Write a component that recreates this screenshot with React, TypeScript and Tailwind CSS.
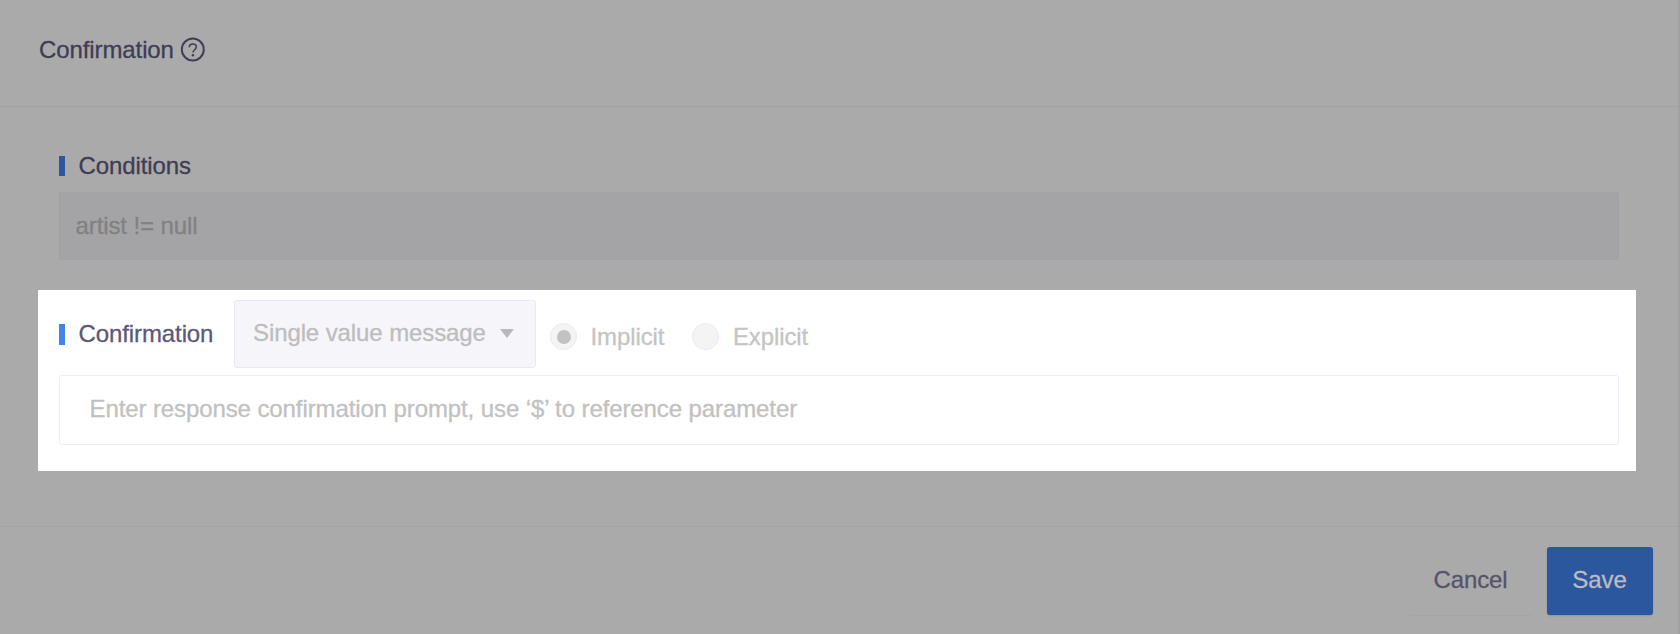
import type { ReactNode } from "react";

function SectionLabel({ children, dimmed = false }: { children: ReactNode; dimmed?: boolean }) {
  return (
    <div className="flex items-start">
      <span className={dimmed ? "mt-[4px] h-5 w-1.5 bg-[#2b579f]" : "mt-[4px] h-[21px] w-1.5 bg-[#4183ef]"} />
      <span className={dimmed ? "ml-[13.5px] text-[#3f3c55]" : "ml-[13.5px] text-[#5b5878]"}>{children}</span>
    </div>
  );
}

function Radio({ label, checked = false }: { label: string; checked?: boolean }) {
  return (
    <div role="radio" aria-checked={checked} className="flex items-start text-[#c4c4c4]">
      <span className="flex size-[27px] items-center justify-center rounded-full border border-[#e9e8f6] bg-[#f4f4f4]">
        {checked && <span className="size-[14px] rounded-full bg-[#c2c2c2]" />}
      </span>
      <span className="ml-[13.5px]">{label}</span>
    </div>
  );
}

export default function App() {
  return (
    <main className="flex h-[634px] w-[1680px] flex-col overflow-hidden border-r-2 border-[#a1a1a1] bg-[#aaaaaa] font-['Liberation_Sans',Arial,sans-serif] text-[24px] leading-[28px] tracking-[-0.1px] whitespace-nowrap [-webkit-text-stroke:0.3px_currentColor]">
      <header className="flex h-[107px] shrink-0 items-start border-b border-[#a1a1a2] pt-[36px] pl-[39px] text-[#3f3c55]">
        <h1 className="w-[136px]">Confirmation</h1>
        <svg className="mt-px ml-[5px] size-[26px]" viewBox="0 0 26 26" fill="none" stroke="currentColor">
          <circle cx="12.8" cy="12.5" r="11" strokeWidth="1.9" />
          <path d="M9.3 10.3C9.3 8.2 10.8 7 12.8 7s3.5 1.2 3.5 3c0 2.7-3.3 2.8-3.3 5.5" strokeWidth="1.5" />
          <circle cx="12.9" cy="18.2" r="1.2" fill="currentColor" stroke="none" />
        </svg>
      </header>

      <section className="flex h-[420px] shrink-0 flex-col border-b border-[#a3a3ac]">
        <div className="pt-[45px] pl-[59px]">
          <SectionLabel dimmed>Conditions</SectionLabel>
          <div className="mt-[12px] h-[68px] w-[1560px] rounded-[3px] border border-[#a1a1a7] bg-[#a4a4a6] pt-[19px] pl-[15.5px] text-[#818182]">
            artist != null
          </div>
        </div>

        <div className="mt-[30px] ml-[38px] h-[181px] w-[1598px] bg-white pt-[10px] pl-[21px]">
          <div className="flex h-[68px] items-start">
            <div className="w-[175px] pt-[20px]">
              <SectionLabel>Confirmation</SectionLabel>
            </div>
            <div className="flex h-[68px] w-[302px] items-start rounded-[3px] border border-[#e9e8f6] bg-[#f6f5fa] pt-[18px] pl-[18px] text-[#bdbdbd]">
              <span className="w-[247px]">Single value message</span>
              <svg className="mt-[10px] h-[9px] w-[14px]" viewBox="0 0 14 9" fill="#b9b9b9">
                <path d="M0 0h14L7 9z" />
              </svg>
            </div>
            <div role="radiogroup" className="ml-[14px] flex gap-[28px] pt-[23px]">
              <Radio label="Implicit" checked />
              <Radio label="Explicit" />
            </div>
          </div>
          <div className="mt-[7px] h-[70px] w-[1560px] rounded-[3px] border border-[#efeef7] pt-[19px] pl-[29.5px] text-[#c1c1c1]">
            Enter response confirmation prompt, use ‘$’ to reference parameter
          </div>
        </div>
      </section>

      <footer className="flex items-start justify-end pt-[20px] pr-[25px]">
        <button className="h-[68px] w-[124px] rounded-[3px] pb-[2px] pl-px text-[#575468] shadow-[0_1px_1px_#a5a5a5]">Cancel</button>
        <button className="ml-[15px] h-[68px] w-[106px] rounded-[3px] bg-[#2b579f] pr-px pb-[2px] text-[#bdbdc0] shadow-[0_1px_2px_#949494]">Save</button>
      </footer>
    </main>
  );
}
